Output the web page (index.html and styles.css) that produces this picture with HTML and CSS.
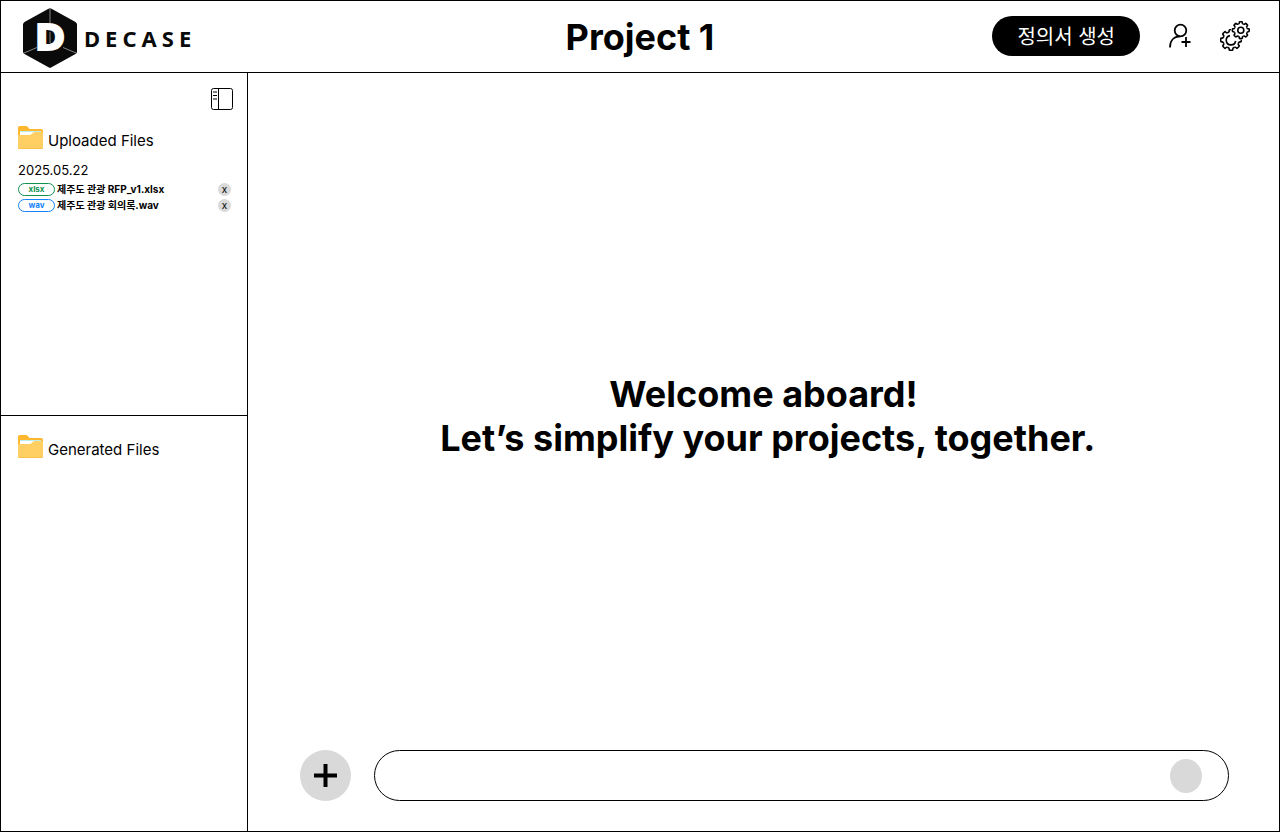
FILE: index.html
```html
<!DOCTYPE html>
<html lang="ko">
<head>
<meta charset="utf-8">
<meta name="viewport" content="width=device-width, initial-scale=1">
<title>DECASE</title>
<link rel="stylesheet" href="styles.css">
</head>
<body>
<svg class="defs" aria-hidden="true">
  <defs>
    <symbol id="folder" viewBox="0 0 25 23">
      <path d="M0 1.500Q0 0 1.500 0H8q1.200 0 1.800 1L11.500 3h11.500q2 0 2 2v5H0z" fill="#ffb82e"/>
      <path d="M2 5h21v6H2z" fill="#fff"/>
      <path d="M2 5h21v1H2z" fill="#b9edf0"/>
      <path d="M0 9h11.500q1 0 1.800-.7L15 6.700Q16 6 17 6h7q1 0 1 1v14.500q0 1.500-1.500 1.500h-22Q0 23 0 21.500z" fill="#ffcf63"/>
      <path d="M0 22h25q-.5 1-1.500 1h-22Q.3 23 0 22z" fill="#f9c04a"/>
    </symbol>
    <path id="tooth" d="M-2.530-6.100Q-1.500-6.500-1.500-7.200V-7.800Q-1.500-8.400-.9-8.400H.9Q1.500-8.400 1.500-7.800V-7.200Q1.500-6.500 2.530-6.100" vector-effect="non-scaling-stroke"/>
    <g id="gear">
      <use href="#tooth"/>
      <use href="#tooth" transform="rotate(45)"/>
      <use href="#tooth" transform="rotate(90)"/>
      <use href="#tooth" transform="rotate(135)"/>
      <use href="#tooth" transform="rotate(180)"/>
      <use href="#tooth" transform="rotate(225)"/>
      <use href="#tooth" transform="rotate(270)"/>
      <use href="#tooth" transform="rotate(315)"/>
    </g>
  </defs>
</svg>
<div class="app">
  <header class="topbar">
    <a class="brand" href="#">
      <svg class="brand-mark" viewBox="0 0 54 60" aria-hidden="true">
        <path d="M25.500.7Q27-.3 28.500.7L52.500 14Q54 15 54 16.500V43.500Q54 45 52.500 46L28.500 59.300Q27 60.300 25.500 59.300L1.500 46Q0 45 0 43.500V16.500Q0 15 1.500 14z" fill="#0a0a0a"/>
        <path d="M27 0V16M1 45L14 39.500M40 39.500L53 45" stroke="#858585" fill="none"/>
        <text class="brand-letter" x="12" y="42">D</text>
        <path d="M27 24V35" stroke="#858585"/>
      </svg>
      <span class="brand-name">DECASE</span>
    </a>
    <h1 class="title">Project 1</h1>
    <div class="actions">
      <button class="generate" type="button">정의서 생성</button>
      <button class="icon-button" type="button" aria-label="Add member">
        <svg class="member-icon" viewBox="0 0 24 26" fill="none" stroke="#000" stroke-width="1.800" aria-hidden="true">
          <circle cx="12.500" cy="7.500" r="5.800"/>
          <path d="M2 24.500C2 18 5.500 13.300 12 13.300M18 14v10M13.500 19h9"/>
        </svg>
      </button>
      <button class="icon-button" type="button" aria-label="Settings">
        <svg class="settings-icon" viewBox="0 0 30 30" fill="none" stroke="#000" stroke-width="1.600" aria-hidden="true">
          <use href="#gear" transform="translate(11 19) scale(1.220)"/>
          <circle cx="20.800" cy="9.200" r="10" fill="#fff" stroke="none"/>
          <path d="M10 14.600A4.700 4.700 0 1 0 15.600 20"/>
          <use href="#gear" transform="translate(20.800 9.200)"/>
          <circle cx="20.800" cy="9.200" r="3"/>
        </svg>
      </button>
    </div>
  </header>
  <div class="body">
    <aside class="sidebar">
      <section class="panel uploaded">
        <button class="icon-button collapse" type="button" aria-label="Toggle sidebar">
          <svg class="panel-icon" viewBox="0 0 22 22" fill="none" stroke="#000" aria-hidden="true">
            <rect x=".5" y=".5" width="21" height="21" rx="2"/>
            <path d="M7.500 0V22M2 7.500H6"/>
            <path d="M2 4H6M2 11H6" stroke="#555" stroke-width="1.500"/>
          </svg>
        </button>
        <h2 class="panel-title"><svg class="folder" aria-hidden="true"><use href="#folder"/></svg>Uploaded Files</h2>
        <p class="date">2025.05.22</p>
        <ul class="files">
          <li class="file">
            <span class="tag tag-xlsx">xlsx</span>
            <span class="file-name">제주도 관광 RFP_v1.xlsx</span>
            <button class="remove" type="button" aria-label="Remove 제주도 관광 RFP_v1.xlsx">x</button>
          </li>
          <li class="file">
            <span class="tag tag-wav">wav</span>
            <span class="file-name">제주도 관광 회의록.wav</span>
            <button class="remove" type="button" aria-label="Remove 제주도 관광 회의록.wav">x</button>
          </li>
        </ul>
      </section>
      <section class="panel generated">
        <h2 class="panel-title"><svg class="folder" aria-hidden="true"><use href="#folder"/></svg>Generated Files</h2>
      </section>
    </aside>
    <main class="main">
      <div class="welcome">
        <p class="welcome-text">Welcome aboard!<br>&nbsp;Let’s simplify your projects, together.</p>
      </div>
      <form class="composer">
        <button class="attach" type="button" aria-label="Add file">
          <svg class="plus" viewBox="0 0 23 23" stroke="#000" stroke-width="4" aria-hidden="true"><path d="M11.500 0V23M0 11.500H23"/></svg>
        </button>
        <div class="field">
          <input class="message" type="text" aria-label="Message">
          <button class="send" type="submit" aria-label="Send"></button>
        </div>
      </form>
    </main>
  </div>
</div>
</body>
</html>
```
FILE: styles.css
```css
* {
  box-sizing: border-box;
}

body {
  margin: 0;
  color: #000;
  background: #fff;
  font-family: Inter, "Noto Sans CJK KR", sans-serif;
}

h1, h2, p, ul {
  margin: 0;
  padding: 0;
}

button {
  padding: 0;
  border: 0;
  color: inherit;
  font: inherit;
  cursor: pointer;
}

svg {
  display: block;
  flex: none;
}

.defs {
  position: absolute;
  width: 0;
  height: 0;
}

.app {
  display: flex;
  flex-direction: column;
  min-height: 100vh;
  border: 1px solid #000;
}

.topbar {
  display: grid;
  grid-template-columns: 1fr auto 1fr;
  align-items: center;
  height: 72px;
  padding: 0 22px;
  border-bottom: 1px solid #000;
}

.brand {
  display: flex;
  align-items: center;
  gap: 7px;
  padding-top: 3px;
  color: #0a0a0a;
  text-decoration: none;
}

.brand-mark {
  width: 54px;
  height: 60px;
}

.brand-letter {
  fill: #fff;
  stroke: #fff;
  stroke-width: 2px;
  font-family: "DejaVu Sans", sans-serif;
  font-size: 36px;
  font-weight: 700;
}

.brand-name {
  font-family: "Noto Sans", sans-serif;
  font-size: 22px;
  font-weight: 700;
  letter-spacing: 5px;
}

.title {
  font-size: 36px;
  font-weight: 700;
  line-height: 44px;
}

.actions {
  display: flex;
  align-items: center;
  justify-content: flex-end;
  gap: 28px;
  padding: 0 7px 2px 0;
}

.generate {
  height: 40px;
  padding: 0 25px;
  border-radius: 20px;
  color: #fff;
  background: #000;
  font-size: 20px;
}

.icon-button {
  background: none;
}

.member-icon {
  width: 24px;
  height: 26px;
}

.settings-icon {
  width: 30px;
  height: 30px;
}

.body {
  display: flex;
  flex: 1;
}

.sidebar {
  display: flex;
  flex-direction: column;
  width: 247px;
  border-right: 1px solid #000;
}

.panel {
  display: flex;
  flex-direction: column;
  padding: 0 14px 0 17px;
}

.uploaded {
  flex: 343 0 0;
  padding-top: 15px;
  border-bottom: 1px solid #000;
}

.generated {
  flex: 415 0 0;
  padding-top: 19px;
}

.collapse {
  align-self: flex-end;
}

.panel-icon {
  width: 22px;
  height: 22px;
}

.collapse + .panel-title {
  margin-top: 16px;
}

.panel-title {
  display: flex;
  align-items: flex-end;
  gap: 5px;
  font-size: 15px;
  font-weight: 400;
  line-height: 16px;
}

.folder {
  width: 25px;
  height: 23px;
}

.date {
  margin-top: 13px;
  font-size: 13px;
  line-height: 16px;
}

.files {
  margin-top: 3px;
  list-style: none;
}

.file {
  display: flex;
  align-items: center;
  height: 16px;
  padding-right: 2px;
}

.tag {
  width: 37px;
  height: 13px;
  border: 1px solid;
  border-radius: 7px;
  font-size: 8px;
  font-weight: 700;
  line-height: 11px;
  text-align: center;
}

.tag-xlsx {
  color: #0f9250;
}

.tag-wav {
  color: #1684f8;
}

.file-name {
  flex: 1;
  margin-left: 2px;
  font-size: 10px;
  font-weight: 700;
  line-height: 16px;
}

.remove {
  width: 13px;
  height: 13px;
  border-radius: 50%;
  background: #d9d9d9;
  font-size: 10px;
  line-height: 13px;
}

.main {
  display: flex;
  flex: 1;
  flex-direction: column;
}

.welcome {
  display: flex;
  flex: 1;
  align-items: center;
  justify-content: center;
  padding-top: 8px;
}

.welcome-text {
  font-size: 36px;
  font-weight: 700;
  line-height: 44px;
  text-align: center;
}

.composer {
  display: flex;
  gap: 23px;
  padding: 0 50px 30px 52px;
}

.attach {
  display: grid;
  place-items: center;
  width: 51px;
  height: 51px;
  border-radius: 50%;
  background: #d9d9d9;
}

.plus {
  width: 23px;
  height: 23px;
}

.field {
  display: flex;
  flex: 1;
  align-items: center;
  height: 51px;
  padding: 0 26px;
  border: 1px solid #000;
  border-radius: 26px;
}

.message {
  flex: 1;
  min-width: 0;
  border: 0;
  outline: 0;
  background: none;
  font: inherit;
}

.send {
  width: 32px;
  height: 34px;
  border-radius: 50%;
  background: #d9d9d9;
}
```
